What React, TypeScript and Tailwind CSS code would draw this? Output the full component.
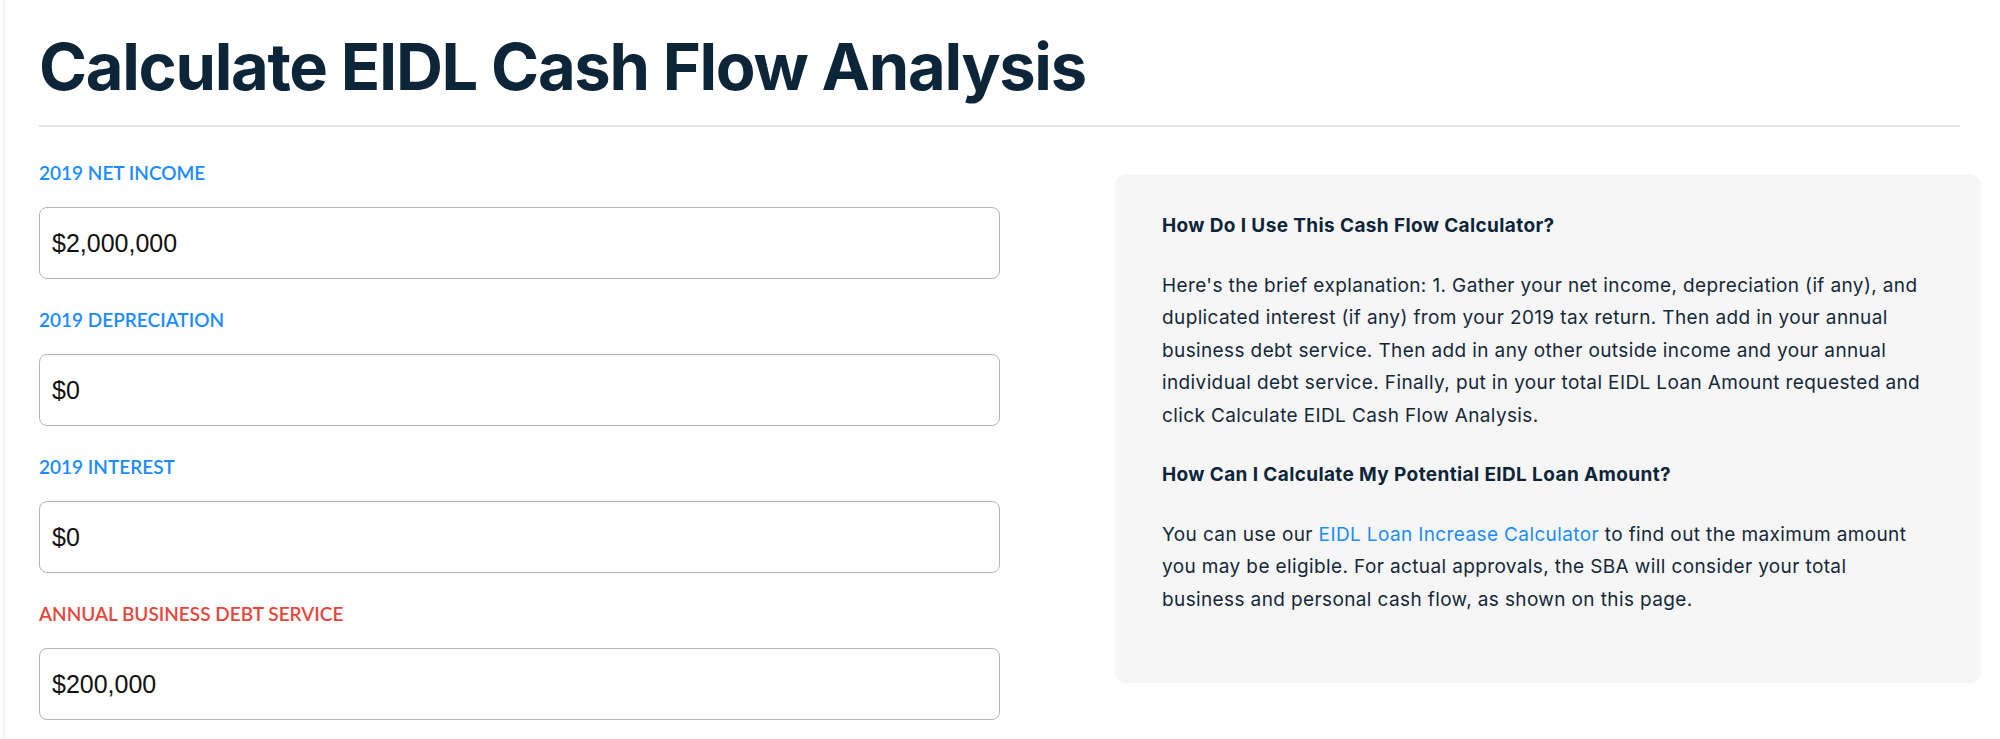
import React from "react";

const fields = [
  { label: "2019 NET INCOME", value: "$2,000,000", red: false },
  { label: "2019 DEPRECIATION", value: "$0", red: false },
  { label: "2019 INTEREST", value: "$0", red: false },
  { label: "ANNUAL BUSINESS DEBT SERVICE", value: "$200,000", red: true },
];

export default function App() {
  return (
    <div className="min-h-screen overflow-hidden bg-white font-['Lato',sans-serif]">
      <div className="ml-[3px] min-h-screen border-l-2 border-[#f2f2f2] pl-[34px] pt-[27px]">
        <h1 className="font-['Inter',sans-serif] text-[65px] font-bold leading-[80px] tracking-[-1.3px] text-[#0d2538]">
          Calculate EIDL Cash Flow Analysis
        </h1>
        <div className="mt-[18px] h-[2px] w-[1921px] bg-[#e3e3e3]" />
        <div className="flex items-start">
          <div className="w-[961px] shrink-0 pt-[34px]">
            {fields.map((f, i) => (
              <div key={f.label} className={i > 0 ? "mt-[29px]" : ""}>
                <div
                  className={
                    "text-[19px] font-semibold leading-[24px] " +
                    (f.red ? "text-[#e8453c]" : "text-[#1a8cff]")
                  }
                >
                  {f.label}
                </div>
                <input
                  readOnly
                  value={f.value}
                  className="mt-[22px] block h-[72px] w-full rounded-[8px] border-[1.5px] border-[#b4b4b4] bg-white px-[12px] font-['Liberation_Sans',Arial,sans-serif] text-[25px] text-[#111111] outline-none"
                />
              </div>
            ))}
          </div>
          <div className="ml-[115px] mt-[47px] w-[866px] shrink-0 rounded-[12px] bg-[#f6f6f6] px-[47px] pb-[40px] pt-[36px] font-['Inter',sans-serif] text-[19px] leading-[32.5px] tracking-[0.38px] text-[#15283a]">
            <h3 className="mb-[27px] font-bold text-[#0d2538]">
              How Do I Use This Cash Flow Calculator?
            </h3>
            <p className="mb-[27px] whitespace-nowrap">
              Here's the brief explanation: 1. Gather your net income, depreciation (if any), and
              <br />
              duplicated interest (if any) from your 2019 tax return. Then add in your annual
              <br />
              business debt service. Then add in any other outside income and your annual
              <br />
              individual debt service. Finally, put in your total EIDL Loan Amount requested and
              <br />
              click Calculate EIDL Cash Flow Analysis.
            </p>
            <h3 className="mb-[27px] font-bold text-[#0d2538]">
              How Can I Calculate My Potential EIDL Loan Amount?
            </h3>
            <p className="mb-[27px] whitespace-nowrap">
              You can use our{" "}
              <a className="text-[#1a8cff]" href="#">
                EIDL Loan Increase Calculator
              </a>{" "}
              to find out the maximum amount
              <br />
              you may be eligible. For actual approvals, the SBA will consider your total
              <br />
              business and personal cash flow, as shown on this page.
            </p>
          </div>
        </div>
      </div>
    </div>
  );
}
